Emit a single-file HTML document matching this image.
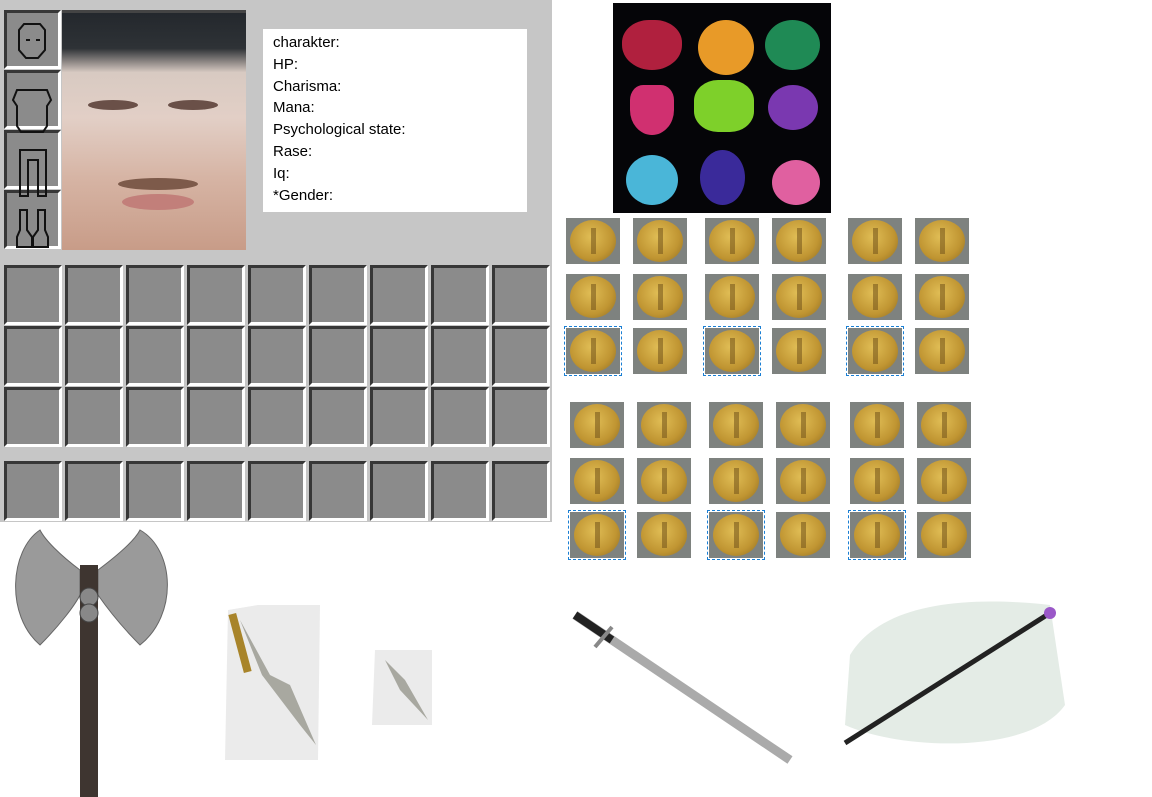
<!DOCTYPE html><html><head><style>
body{margin:0;width:1152px;height:797px;background:#fff;position:relative;overflow:hidden;font-family:"Liberation Sans",sans-serif}
.a{position:absolute}
.panel{left:0;top:0;width:552px;height:522px;background:#c6c6c6}
.s{position:absolute;width:55px;height:55px;background:#8b8b8b;border-top:3px solid #373737;border-left:3px solid #373737;border-right:3px solid #fff;border-bottom:3px solid #fff;box-sizing:border-box}
.c{position:absolute;width:54px;height:46px;background:#7e827f}
.c:after{content:"";position:absolute;left:4px;top:2px;width:46px;height:42px;border-radius:50%;background:radial-gradient(ellipse at 45% 40%,#e0bd55,#c09532 60%,#8c6a22)}
.c:before{content:"";position:absolute;left:25px;top:10px;width:5px;height:26px;background:#7a5a1e;z-index:1;opacity:.6}
.sel{outline:1.5px dashed #1a7fd4;outline-offset:1px}
.t{left:263px;top:29px;width:264px;height:183px;background:#fff;font-size:15px;line-height:21.8px;color:#000;padding:3px 0 0 10px;box-sizing:border-box}
</style></head><body>
<div class="a panel"></div>
<div class="s" style="left:4px;top:10px;width:57px;height:59px"></div>
<div class="s" style="left:4px;top:70px;width:57px;height:59px"></div>
<div class="s" style="left:4px;top:130px;width:57px;height:59px"></div>
<div class="s" style="left:4px;top:190px;width:57px;height:59px"></div>
<svg class="a" style="left:4px;top:10px" width="57" height="240" fill="none" stroke="#111" stroke-width="2">
<path d="M20 14h16l5 6v20l-7 8h-12l-7-8v-20z M22 30h4 M32 30h4"/>
<path d="M13 80h30l4 10-4 6v20l-4 6h-22l-4-6v-20l-4-6z"/>
<path d="M16 140h26v46h-8v-36h-10v36h-8z"/>
<path d="M16 200h7v20l5 7v10h-15v-10l3-7z M34 200h7v20l3 7v10h-15v-10l5-7z"/>
</svg>
<div class="a" style="left:62px;top:10px;width:184px;height:240px;background:linear-gradient(180deg,#23272c 0,#2e3236 16%,#d8cac2 26%,#e2cfc6 45%,#d6b4a4 70%,#c89c88 100%)"></div>
<div class="a" style="left:62px;top:10px;width:184px;height:3px;background:#444"></div>
<div class="a" style="left:88px;top:100px;width:50px;height:10px;border-radius:50%;background:#6a5048"></div>
<div class="a" style="left:168px;top:100px;width:50px;height:10px;border-radius:50%;background:#6a5048"></div>
<div class="a" style="left:118px;top:178px;width:80px;height:12px;border-radius:50%;background:#7d5a4a"></div>
<div class="a" style="left:122px;top:194px;width:72px;height:16px;border-radius:50%;background:#c27f7a"></div>
<div class="a t">charakter:<br>HP:<br>Charisma:<br>Mana:<br>Psychological state:<br>Rase:<br>Iq:<br>*Gender:</div>
<div id="g"></div>
<div class="a" style="left:613px;top:3px;width:218px;height:210px;background:#050508"></div>
<div class="a" style="left:622px;top:20px;width:60px;height:50px;border-radius:45% 45% 50% 50%;background:#b0203e"></div>
<div class="a" style="left:698px;top:20px;width:56px;height:55px;border-radius:50%;background:#e89a28"></div>
<div class="a" style="left:765px;top:20px;width:55px;height:50px;border-radius:50%;background:#1f8a55"></div>
<div class="a" style="left:630px;top:85px;width:44px;height:50px;border-radius:30% 30% 50% 50%;background:#d03070"></div>
<div class="a" style="left:694px;top:80px;width:60px;height:52px;border-radius:40%;background:#7ed02a"></div>
<div class="a" style="left:768px;top:85px;width:50px;height:45px;border-radius:50%;background:#7a38b0"></div>
<div class="a" style="left:626px;top:155px;width:52px;height:50px;border-radius:50%;background:#4ab6d8"></div>
<div class="a" style="left:700px;top:150px;width:45px;height:55px;border-radius:50%;background:#3a2a9a"></div>
<div class="a" style="left:772px;top:160px;width:48px;height:45px;border-radius:50%;background:#e060a0"></div>
<svg class="a" style="left:0;top:525px" width="1152" height="272">
<path d="M80 45 C60 30 45 15 40 5 C10 25 5 90 40 120 C60 100 75 80 80 70z" fill="#9a9a9a" stroke="#666"/>
<path d="M98 45 C118 30 135 15 140 5 C175 25 178 90 140 120 C120 100 105 80 98 70z" fill="#9a9a9a" stroke="#666"/>
<rect x="80" y="40" width="18" height="232" fill="#3e3530"/>
<circle cx="89" cy="72" r="9" fill="#888" stroke="#444"/><circle cx="89" cy="88" r="9" fill="#888" stroke="#444"/>
<path d="M228 85 L258 80 L320 80 L318 235 L225 235z" fill="#e6e6e6" opacity=".8"/>
<path d="M240 95 L262 150 L300 200 L316 220 L290 160 L270 150z" fill="#a8a8a0"/>
<rect x="236" y="88" width="8" height="60" fill="#a8842a" transform="rotate(-15 240 118)"/>
<path d="M375 125 L432 125 L432 200 L372 200z" fill="#e6e6e6" opacity=".8"/>
<path d="M385 135 L400 165 L428 195 L405 155z" fill="#a8a8a0"/>
<path d="M575 90 L790 235" stroke="#aaa" stroke-width="9"/>
<path d="M575 90 L612 115" stroke="#222" stroke-width="8"/>
<path d="M595 122 L612 102" stroke="#888" stroke-width="4"/>
<path d="M850 130 C880 80 960 70 1050 80 L1065 180 C1030 230 900 225 845 200z" fill="#e4ece6"/>
<path d="M845 218 L1050 88" stroke="#222" stroke-width="5"/>
<circle cx="1050" cy="88" r="6" fill="#9a58c8"/>
</svg>
<script>
var g=document.getElementById('g'),h='';
var ys=[265,326,387,461];
for(var r=0;r<4;r++)for(var i=0;i<9;i++)h+='<div class="s" style="left:'+(4+i*61)+'px;top:'+ys[r]+'px;width:58px;height:60px"></div>';
var x1=[566,633,705,772,848,915],x2=[570,637,709,776,850,917],y1=[218,274,328],y2=[402,458,512];
for(var r=0;r<3;r++)for(var i=0;i<6;i++){
h+='<div class="c'+((r==2&&i%2==0)?' sel':'')+'" style="left:'+x1[i]+'px;top:'+y1[r]+'px"></div>';
h+='<div class="c'+((r==2&&i%2==0)?' sel':'')+'" style="left:'+x2[i]+'px;top:'+y2[r]+'px"></div>';}
g.innerHTML=h;
</script>
</body></html>
